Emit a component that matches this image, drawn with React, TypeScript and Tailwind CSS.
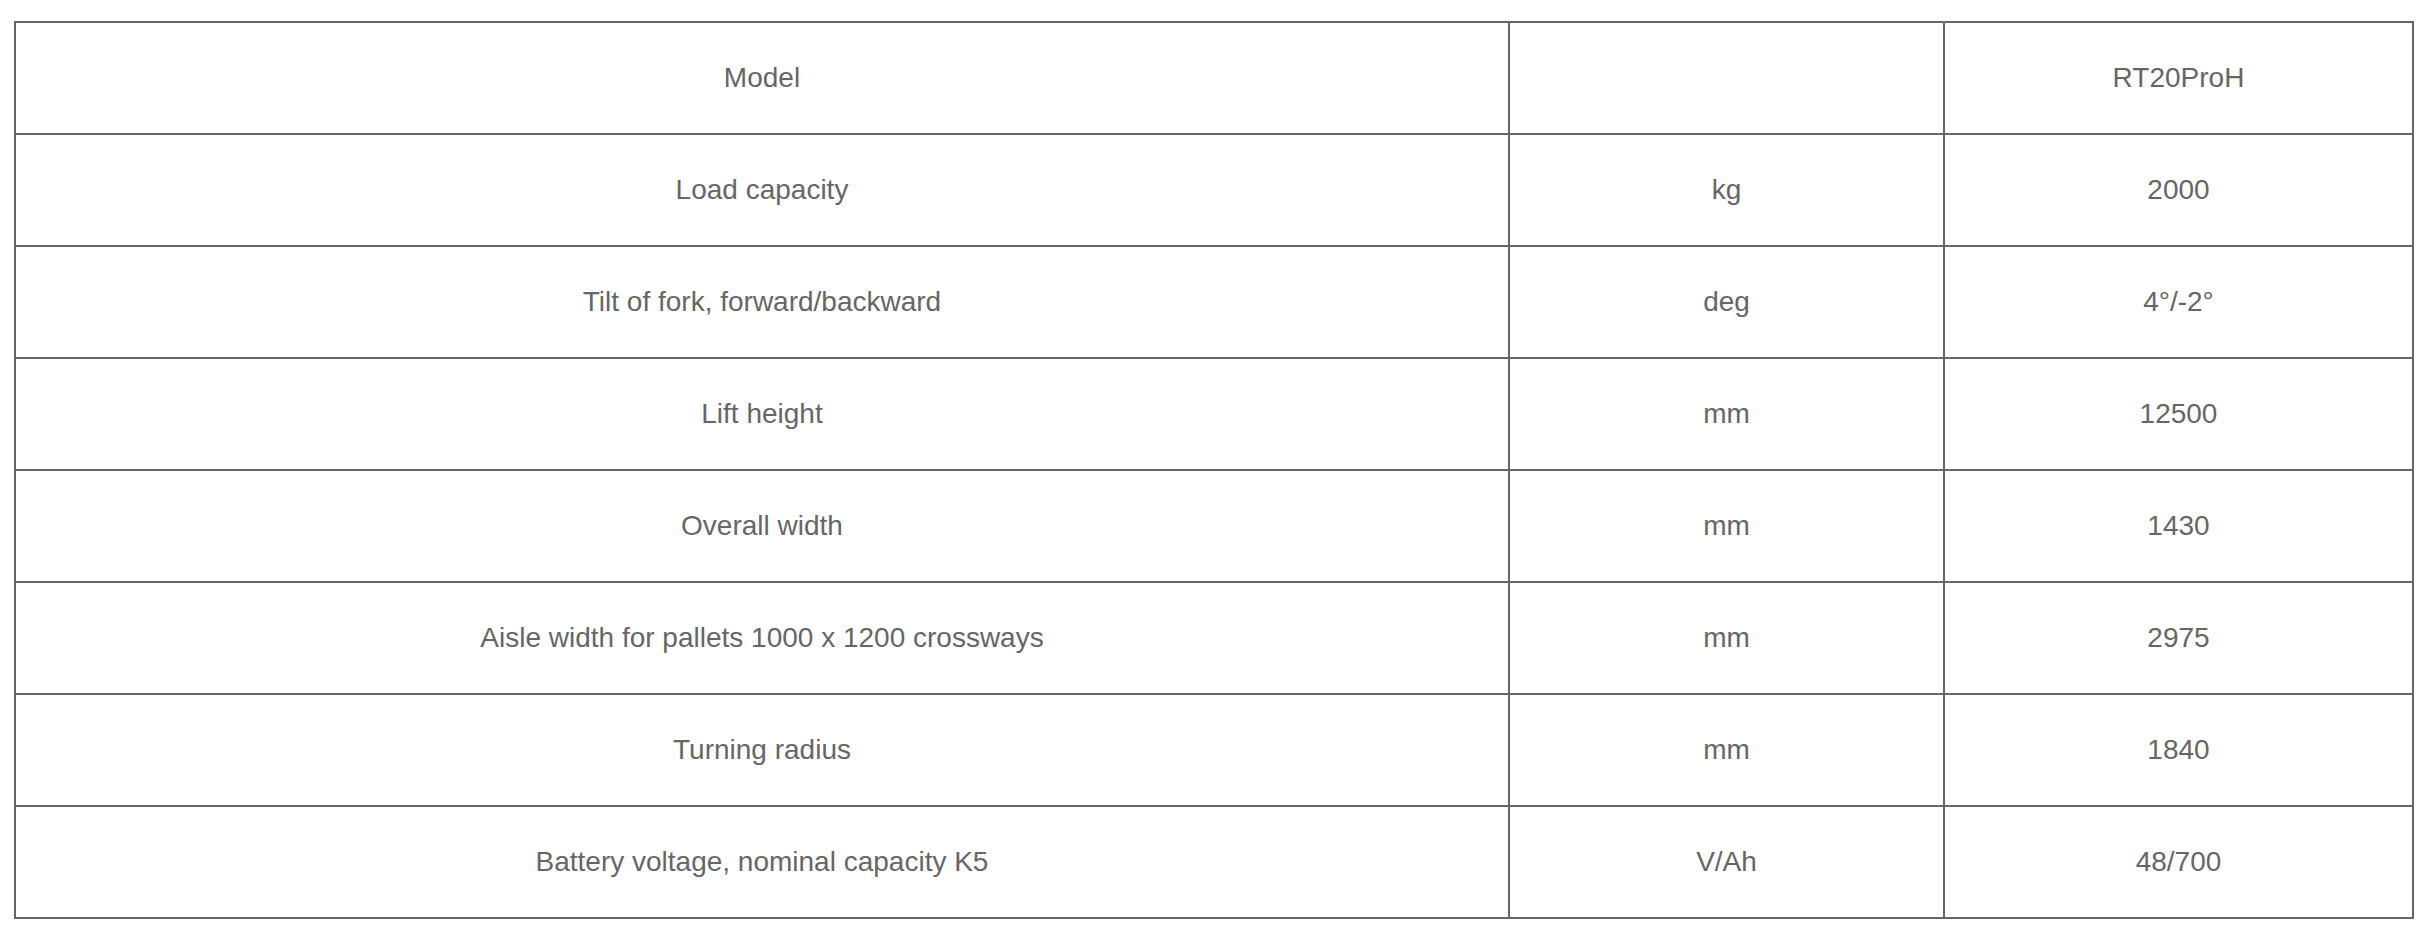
const rows: [string, string, string][] = [
  ['Model', '', 'RT20ProH'],
  ['Load capacity', 'kg', '2000'],
  ['Tilt of fork, forward/backward', 'deg', '4°/-2°'],
  ['Lift height', 'mm', '12500'],
  ['Overall width', 'mm', '1430'],
  ['Aisle width for pallets 1000 x 1200 crossways', 'mm', '2975'],
  ['Turning radius', 'mm', '1840'],
  ['Battery voltage, nominal capacity K5', 'V/Ah', '48/700'],
]

export default function App() {
  return (
    <div className="min-h-[930px] bg-white pl-[14px] pt-[21px] font-['Liberation_Sans',Arial,sans-serif] text-[28px] text-[#666666]">
      <div className="grid w-[2400px] grid-cols-[1494px_435px_469px] border-l-2 border-t-2 border-[#666666]">
        {rows.map((r, i) => (
          <div key={i} className="contents">
            {r.map((c, j) => (
              <div
                key={j}
                className="flex h-[112px] items-center justify-center border-b-2 border-r-2 border-[#666666]"
              >
                {c}
              </div>
            ))}
          </div>
        ))}
      </div>
    </div>
  )
}
